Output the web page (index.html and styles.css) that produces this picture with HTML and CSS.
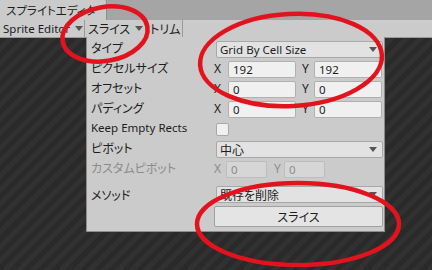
FILE: index.html
```html
<!DOCTYPE html>
<html lang="ja">
<head>
    <meta charset="UTF-8">
    <title>スプライトエディタ</title>
    <link rel="stylesheet" href="styles.css">
</head>
<body>
    <div class="window">
        <div class="titlebar">
            <div class="tab">スプライトエディタ</div>
        </div>
        <div class="toolbar">
            <div class="tool latin">Sprite Editor <span class="caret"></span></div>
            <div class="tool">スライス <span class="caret"></span></div>
            <div class="tool">トリム</div>
        </div>
        <div class="canvas">
            <div class="slice-menu">
                <div class="row">
                    <span class="label">タイプ</span>
                    <div class="popup latin">Grid By Cell Size<span class="caret"></span></div>
                </div>
                <div class="row">
                    <span class="label">ピクセルサイズ</span>
                    <div class="vec">
                        <span class="axis">X</span><span class="field latin">192</span>
                        <span class="axis ay">Y</span><span class="field latin">192</span>
                    </div>
                </div>
                <div class="row">
                    <span class="label">オフセット</span>
                    <div class="vec">
                        <span class="axis">X</span><span class="field latin">0</span>
                        <span class="axis ay">Y</span><span class="field latin">0</span>
                    </div>
                </div>
                <div class="row">
                    <span class="label">パディング</span>
                    <div class="vec">
                        <span class="axis">X</span><span class="field latin">0</span>
                        <span class="axis ay">Y</span><span class="field latin">0</span>
                    </div>
                </div>
                <div class="row">
                    <span class="label latin">Keep Empty Rects</span>
                    <span class="check"></span>
                </div>
                <div class="row">
                    <span class="label">ピボット</span>
                    <div class="popup">中心<span class="caret"></span></div>
                </div>
                <div class="row disabled">
                    <span class="label">カスタムピボット</span>
                    <div class="vec small">
                        <span class="axis">X</span><span class="field latin">0</span>
                        <span class="axis ay">Y</span><span class="field latin">0</span>
                    </div>
                </div>
                <div class="row method">
                    <span class="label">メソッド</span>
                    <div class="popup">既存を削除<span class="caret"></span></div>
                </div>
                <div class="row action">
                    <button class="slice-btn">スライス</button>
                </div>
            </div>
        </div>
        <svg class="marks" width="432" height="270" viewBox="0 0 432 270">
            <ellipse cx="105" cy="34" rx="43" ry="27" transform="rotate(-10 105 34)"/>
            <ellipse cx="291" cy="60" rx="91" ry="46" transform="rotate(-3 291 60)"/>
            <ellipse cx="298" cy="224" rx="101" ry="41"/>
        </svg>
    </div>
</body>
</html>
```
FILE: styles.css
```css
* {
    box-sizing: border-box;
}
body {
    margin: 0;
    background: #2b2b2b;
    font-family: "Noto Sans CJK JP", "Noto Sans", sans-serif;
    font-size: 12px;
    font-feature-settings: "palt";
    color: #1c1c1c;
    white-space: nowrap;
}
.latin {
    font-family: "Noto Sans", "Noto Sans CJK JP", sans-serif;
    font-size: 11.5px;
}
.window {
    width: 432px;
    height: 270px;
    position: relative;
    overflow: hidden;
    display: flex;
    flex-direction: column;
}
.titlebar {
    height: 20px;
    background: #a5a5a5;
    display: flex;
}
.tab {
    width: 107px;
    padding-left: 6px;
    line-height: 21px;
    font-size: 11.5px;
    background: #cbcbcb;
    border-right: 1px solid #8e8e8e;
    border-top-right-radius: 2px;
}
.toolbar {
    height: 18px;
    background: #cbcbcb;
    border-bottom: 1px solid #9a9a9a;
    display: flex;
}
.tool {
    height: 17px;
    line-height: 17px;
    padding: 0 0 0 3px;
    border-right: 1px solid #9a9a9a;
    display: flex;
    align-items: center;
    gap: 5px;
}
.tool:nth-child(1) {
    width: 85px;
}
.tool:nth-child(2) {
    width: 62px;
}
.tool:nth-child(3) {
    width: 36px;
}
.caret {
    width: 0;
    height: 0;
    border-left: 4px solid transparent;
    border-right: 4px solid transparent;
    border-top: 5px solid #555;
}
.canvas {
    flex: 1;
    position: relative;
    background: repeating-linear-gradient(135deg, #2a2a2a 0 5px, #313131 5px 10px);
}
.slice-menu {
    position: absolute;
    left: 86px;
    top: -1px;
    width: 299px;
    height: 195px;
    padding: 2px 0 0 4px;
    background: #cbcbcb;
    border: 1px solid #8c8c8c;
    border-top: none;
}
.row {
    height: 20px;
    display: grid;
    grid-template-columns: 123px 1fr;
    align-items: center;
}
.row.method {
    height: 24px;
    align-items: end;
}
.row.action {
    height: 26px;
    grid-template-columns: 1fr;
    padding-left: 123px;
}
.label {
    line-height: 16px;
    margin-top: -2px;
}
.popup {
    margin-left: 2px;
    width: 167px;
    height: 17px;
    padding-left: 3px;
    background: #e2e2e2;
    border: 1px solid #a8a8a8;
    border-radius: 2px;
    display: flex;
    justify-content: space-between;
    align-items: center;
}
.popup .caret {
    margin-right: 5px;
}
.vec {
    display: flex;
    align-items: center;
}
.axis {
    width: 14px;
    line-height: 16px;
    font-family: "Noto Sans", sans-serif;
}
.ay {
    margin-left: 6px;
    width: 12px;
}
.field {
    width: 68px;
    height: 17px;
    line-height: 15px;
    padding-left: 4px;
    background: #f0f0f0;
    border: 1px solid #b0b0b0;
    border-radius: 2px;
}
.vec.small .axis {
    width: 12px;
}
.vec.small .ay {
    margin-left: 7px;
    width: 10px;
}
.vec.small .field {
    width: 41px;
}
.disabled {
    color: #8c8c8c;
}
.disabled .field {
    background: #d6d6d6;
    border-color: #bdbdbd;
}
.check {
    margin-left: 2px;
    width: 13px;
    height: 13px;
    background: #f0f0f0;
    border: 1px solid #a8a8a8;
    border-radius: 2px;
}
.slice-btn {
    width: 169px;
    height: 21px;
    padding: 0;
    font: inherit;
    color: #1c1c1c;
    background: #e4e4e4;
    border: 1px solid #a0a0a0;
    border-radius: 2px;
}
.marks {
    position: absolute;
    left: 0;
    top: 0;
    pointer-events: none;
}
.marks ellipse {
    fill: none;
    stroke: #e3131e;
    stroke-width: 4.5;
}
```
